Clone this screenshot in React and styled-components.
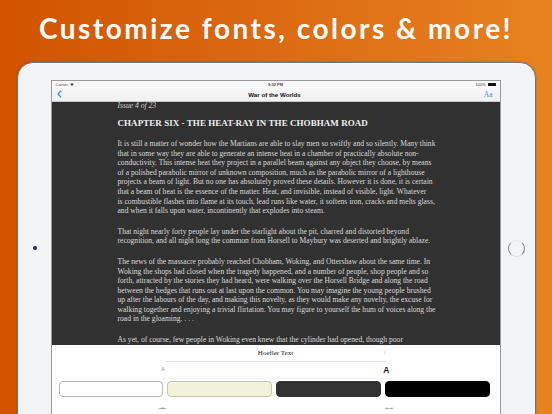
import React from 'react';
import styled, { createGlobalStyle } from 'styled-components';

const GlobalStyle = createGlobalStyle`
    html, body {
        margin: 0;
        padding: 0;
    }
    body {
        width: 552px;
        height: 414px;
        overflow: hidden;
        background: linear-gradient(90deg, #d15300 0%, #dc6a12 50%, #e8821f 100%);
    }
`;

const Page = styled.div`
    display: flex;
    flex-direction: column;
    width: 552px;
    height: 414px;
    overflow: hidden;
`;

const Headline = styled.h1`
    display: flex;
    flex: none;
    height: 62px;
    margin: 0;
    padding-bottom: 6px;
    box-sizing: border-box;
    align-items: center;
    justify-content: center;
    font-family: "Lato", "Open Sans", sans-serif;
    font-weight: 700;
    font-size: 28px;
    letter-spacing: 2.5px;
    color: #ffffff;
`;

const Tablet = styled.div`
    display: flex;
    flex: none;
    width: 519px;
    height: 372px;
    margin-left: 17px;
    box-sizing: border-box;
    border: 1.5px solid #747474;
    border-radius: 16px;
    background: #f3f4f6;
    box-shadow: inset 0 1px 0 #ffffff, 0 0 2px rgba(0, 0, 0, 0.25);
`;

const Bezel = styled.div`
    display: flex;
    width: ${p => p.$width}px;
    flex: none;
    align-items: center;
    justify-content: center;
`;

const Camera = styled.div`
    width: 4px;
    height: 4px;
    border-radius: 50%;
    background: #1d2a3b;
`;

const HomeButton = styled.div`
    width: 15px;
    height: 15px;
    border: 1.5px solid;
    border-color: #e4e5e7 #7d7d7d #dcdcdc #8a8a8a;
    border-radius: 50%;
`;

const Screen = styled.div`
    display: flex;
    flex-direction: column;
    width: 448px;
    margin-top: 17.5px;
    background: #ffffff;
    box-shadow: 0 0 0 1px #9a9a9a;
    overflow: hidden;
`;

const StatusBar = styled.div`
    display: grid;
    flex: none;
    grid-template-columns: 1fr auto 1fr;
    height: 7px;
    padding: 0 4px;
    align-items: center;
    font-family: "Liberation Sans", Arial, sans-serif;
    font-size: 4px;
    color: #444;
    background: #f7f7f7;
`;

const Carrier = styled.span`
    display: flex;
    gap: 2px;
    align-items: center;
`;

const Clock = styled.span`
    font-weight: bold;
`;

const Battery = styled.span`
    display: flex;
    gap: 2px;
    align-items: center;
    justify-self: end;
`;

const BatteryCell = styled.span`
    width: 8px;
    height: 3px;
    border-radius: 0.5px;
    background: #111;
`;

const NavBar = styled.div`
    display: grid;
    flex: none;
    grid-template-columns: 1fr auto 1fr;
    height: 13px;
    padding: 0 7px 0 5px;
    align-items: center;
    border-bottom: 1px solid #c9c9c9;
    background: linear-gradient(#f7f7f7, #f1f1f1);
`;

const NavTitle = styled.span`
    font-family: "Liberation Sans", Arial, sans-serif;
    font-weight: bold;
    font-size: 6.2px;
    color: #111;
`;

const FontButton = styled.span`
    justify-self: end;
    font-family: "Liberation Serif", "Times New Roman", serif;
    font-size: 7.5px;
    color: #3b8cf2;
`;

const Reader = styled.div`
    flex: none;
    height: 243px;
    padding: 0 65px 0 66px;
    overflow: hidden;
    background: #313131;
    font-family: "Liberation Serif", "Times New Roman", serif;
    color: #dadada;
`;

const IssueLabel = styled.div`
    font-style: italic;
    font-size: 7.6px;
    line-height: 7px;
    color: #cfcfcf;
`;

const ChapterTitle = styled.h2`
    margin: 8.1px 0 10.4px;
    font-size: 9px;
    line-height: 12px;
    font-weight: bold;
    letter-spacing: 0.05px;
    color: #efefef;
    white-space: nowrap;
`;

const Paragraph = styled.p`
    margin: 0 0 11px;
    font-size: 7.6px;
    line-height: 9.6px;
`;

const Line = styled.span`
    display: block;
    white-space: nowrap;
`;

const SettingsPanel = styled.div`
    flex: 1;
    display: flex;
    flex-direction: column;
    align-items: center;
    background: #ffffff;
`;

const FontRow = styled.div`
    display: grid;
    grid-template-columns: 1fr auto 1fr;
    width: 221px;
    height: 16px;
    align-items: center;
    border-bottom: 1px solid #e6e6e6;
    font-family: "Liberation Serif", "Times New Roman", serif;
    font-size: 7px;
    color: #222;
`;

const Chevron = styled.span`
    justify-self: end;
    font-family: "Liberation Sans", Arial, sans-serif;
    font-size: 8px;
    color: #d2d2d2;
`;

const SizeRow = styled.div`
    display: flex;
    width: 228px;
    height: 16px;
    align-items: center;
    justify-content: space-between;
    border-bottom: 1px solid #f1f1f1;
    font-family: "Liberation Sans", Arial, sans-serif;
`;

const SizeGlyph = styled.span`
    font-size: ${p => (p.$large ? 8.5 : 4.5)}px;
    font-weight: ${p => (p.$large ? 'bold' : 'normal')};
    color: ${p => (p.$large ? '#111' : '#888')};
`;

const ThemeSwatches = styled.div`
    display: grid;
    grid-template-columns: repeat(4, 1fr);
    gap: 4px;
    width: 431px;
    margin: 2px 3px 0 0;
`;

const Swatch = styled.div`
    height: 16px;
    box-sizing: border-box;
    border-radius: 4px;
    border: 1px solid ${p => p.$edge};
    background: ${p => p.$fill};
`;

const SpacingRow = styled.div`
    display: flex;
    width: 234px;
    height: 12px;
    margin-top: 5px;
    align-items: center;
    justify-content: space-between;
    font-family: "DejaVu Sans", sans-serif;
    font-size: 5px;
    letter-spacing: -0.5px;
    color: #777;
`;

const chapter = [
    [
        'It is still a matter of wonder how the Martians are able to slay men so swiftly and so silently. Many think',
        'that in some way they are able to generate an intense heat in a chamber of practically absolute non-',
        'conductivity. This intense heat they project in a parallel beam against any object they choose, by means',
        'of a polished parabolic mirror of unknown composition, much as the parabolic mirror of a lighthouse',
        'projects a beam of light. But no one has absolutely proved these details. However it is done, it is certain',
        'that a beam of heat is the essence of the matter. Heat, and invisible, instead of visible, light. Whatever',
        'is combustible flashes into flame at its touch, lead runs like water, it softens iron, cracks and melts glass,',
        'and when it falls upon water, incontinently that explodes into steam.',
    ],
    [
        'That night nearly forty people lay under the starlight about the pit, charred and distorted beyond',
        'recognition, and all night long the common from Horsell to Maybury was deserted and brightly ablaze.',
    ],
    [
        'The news of the massacre probably reached Chobham, Woking, and Ottershaw about the same time. In',
        'Woking the shops had closed when the tragedy happened, and a number of people, shop people and so',
        'forth, attracted by the stories they had heard, were walking over the Horsell Bridge and along the road',
        'between the hedges that runs out at last upon the common. You may imagine the young people brushed',
        'up after the labours of the day, and making this novelty, as they would make any novelty, the excuse for',
        'walking together and enjoying a trivial flirtation. You may figure to yourself the hum of voices along the',
        'road in the gloaming. . . .',
    ],
    [
        'As yet, of course, few people in Woking even knew that the cylinder had opened, though poor',
    ],
];

const themes = [
    { fill: '#ffffff', edge: '#b9b9b9' },
    { fill: '#f3f3dc', edge: '#c6c6ae' },
    { fill: '#333333', edge: '#333333' },
    { fill: '#000000', edge: '#000000' },
];

function WifiIcon() {
    return (
        <svg width="4" height="3" viewBox="0 0 8 6">
            <path d="M4 6 L0.5 2 A5 5 0 0 1 7.5 2 Z" fill="#444" />
        </svg>
    );
}

function BackIcon() {
    return (
        <svg width="5" height="8" viewBox="0 0 5 8">
            <path d="M4 0.8 L1 4 L4 7.2" fill="none" stroke="#3b8cf2" strokeWidth="1.3" />
        </svg>
    );
}

function App() {
    return (
        <Page>
            <GlobalStyle />
            <Headline>Customize fonts, colors &amp; more!</Headline>
            <Tablet>
                <Bezel $width={33.5}>
                    <Camera />
                </Bezel>
                <Screen>
                    <StatusBar>
                        <Carrier>Carrier <WifiIcon /></Carrier>
                        <Clock>9:32 PM</Clock>
                        <Battery>100% <BatteryCell /></Battery>
                    </StatusBar>
                    <NavBar>
                        <BackIcon />
                        <NavTitle>War of the Worlds</NavTitle>
                        <FontButton>Aa</FontButton>
                    </NavBar>
                    <Reader>
                        <IssueLabel>Issue 4 of 23</IssueLabel>
                        <ChapterTitle>CHAPTER SIX - THE HEAT-RAY IN THE CHOBHAM ROAD</ChapterTitle>
                        {chapter.map((para, i) => (
                            <Paragraph key={i}>
                                {para.map(line => <Line key={line}>{line}</Line>)}
                            </Paragraph>
                        ))}
                    </Reader>
                    <SettingsPanel>
                        <FontRow>
                            <span />
                            <span>Hoefler Text</span>
                            <Chevron>›</Chevron>
                        </FontRow>
                        <SizeRow>
                            <SizeGlyph>A</SizeGlyph>
                            <SizeGlyph $large>A</SizeGlyph>
                        </SizeRow>
                        <ThemeSwatches>
                            {themes.map(t => <Swatch key={t.fill} $fill={t.fill} $edge={t.edge} />)}
                        </ThemeSwatches>
                        <SpacingRow>
                            <span>→←</span>
                            <span>←→</span>
                        </SpacingRow>
                    </SettingsPanel>
                </Screen>
                <Bezel $width={34.5}>
                    <HomeButton />
                </Bezel>
            </Tablet>
        </Page>
    );
}

export default App;
